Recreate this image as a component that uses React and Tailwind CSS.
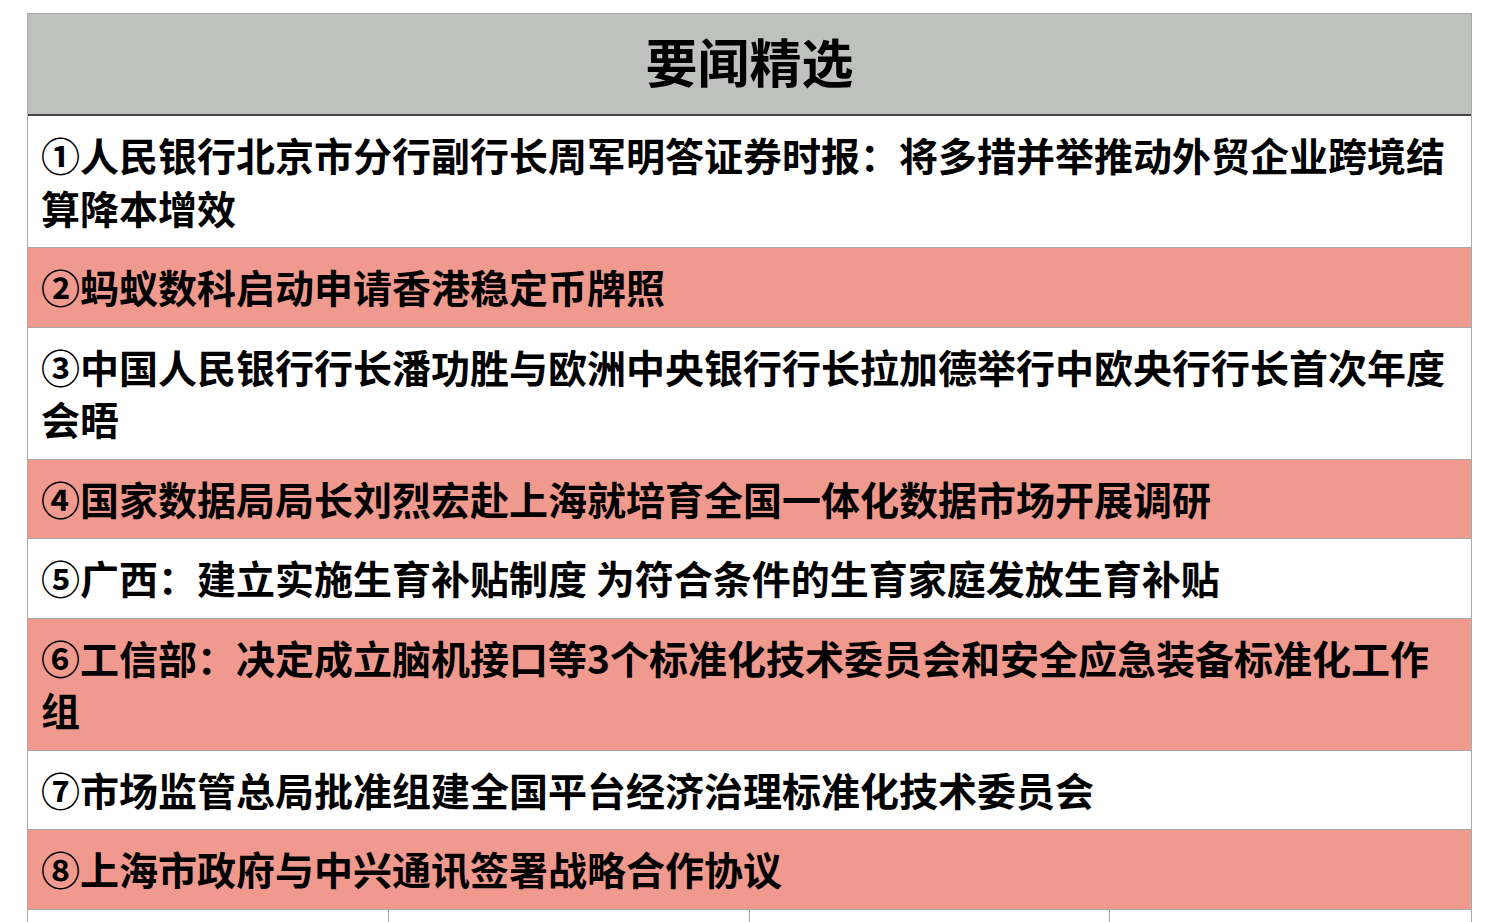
import React from "react";

const items = [
  { text: "①人民银行北京市分行副行长周军明答证券时报：将多措并举推动外贸企业跨境结算降本增效", pink: false },
  { text: "②蚂蚁数科启动申请香港稳定币牌照", pink: true },
  { text: "③中国人民银行行长潘功胜与欧洲中央银行行长拉加德举行中欧央行行长首次年度会晤", pink: false },
  { text: "④国家数据局局长刘烈宏赴上海就培育全国一体化数据市场开展调研", pink: true },
  { text: "⑤广西：建立实施生育补贴制度 为符合条件的生育家庭发放生育补贴", pink: false },
  { text: "⑥工信部：决定成立脑机接口等3个标准化技术委员会和安全应急装备标准化工作组", pink: true },
  { text: "⑦市场监管总局批准组建全国平台经济治理标准化技术委员会", pink: false },
  { text: "⑧上海市政府与中兴通讯签署战略合作协议", pink: true },
];

export default function App() {
  return (
    <div
      className="min-h-screen bg-white pt-[13px] pl-[27px]"
      style={{ fontFamily: '"PingFang SC", "Noto Sans CJK SC", sans-serif' }}
    >
      <div className="w-[1445px] border-x border-t border-[#a9a9a9]">
        <div className="h-[102px] pb-[6px] bg-[#bfc1bf] border-b-2 border-[#444] flex items-center justify-center">
          <h1 className="text-[52px] font-bold text-black leading-none">要闻精选</h1>
        </div>
        {items.map((item, i) => (
          <div
            key={i}
            className={
              "border-b border-[#a9a9a9] px-[13px] pt-[12px] pb-[14px] text-[39px] leading-[52.5px] font-bold text-black " +
              (item.pink ? "bg-[#f0998f]" : "bg-white")
            }
          >
            {item.text}
          </div>
        ))}
        <div className="grid grid-cols-4 h-[40px]">
          <div className="border-r border-[#a9a9a9]"></div>
          <div className="border-r border-[#a9a9a9]"></div>
          <div className="border-r border-[#a9a9a9]"></div>
          <div></div>
        </div>
      </div>
    </div>
  );
}
